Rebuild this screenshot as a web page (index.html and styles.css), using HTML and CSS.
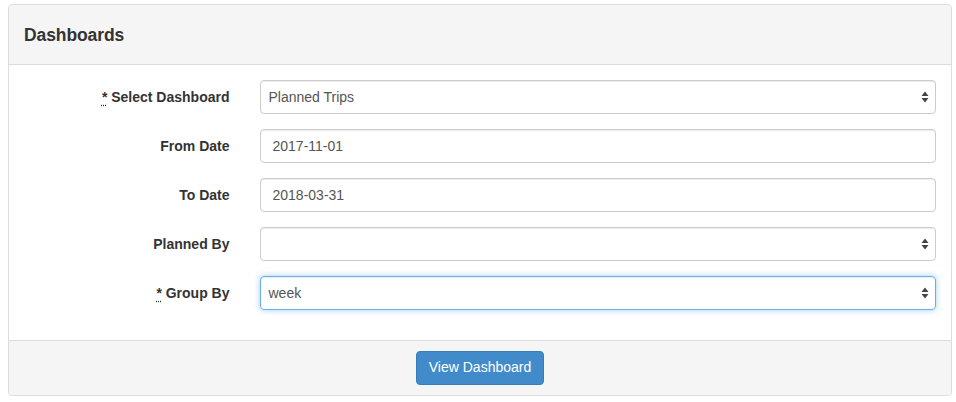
FILE: index.html
```html
<!DOCTYPE html>
<html>
<head>
<meta charset="utf-8">
<link rel="stylesheet" href="styles.css">
</head>
<body>
<div class="panel">
  <div class="panel-heading"><h3 class="panel-title">Dashboards</h3></div>
  <div class="panel-body">
    <div class="form-group">
      <label class="control-label"><abbr title="required">*</abbr> Select Dashboard</label>
      <div class="control-col">
        <div class="select">
          <span>Planned Trips</span>
          <svg class="arrows" width="8" height="12" viewBox="0 0 8 12"><path d="M4 0.5 L7.5 5 L0.5 5 Z M4 11.5 L7.5 7 L0.5 7 Z" fill="#444"/></svg>
        </div>
      </div>
    </div>
    <div class="form-group">
      <label class="control-label">From Date</label>
      <div class="control-col"><div class="input">2017-11-01</div></div>
    </div>
    <div class="form-group">
      <label class="control-label">To Date</label>
      <div class="control-col"><div class="input">2018-03-31</div></div>
    </div>
    <div class="form-group">
      <label class="control-label">Planned By</label>
      <div class="control-col">
        <div class="select">
          <span></span>
          <svg class="arrows" width="8" height="12" viewBox="0 0 8 12"><path d="M4 0.5 L7.5 5 L0.5 5 Z M4 11.5 L7.5 7 L0.5 7 Z" fill="#444"/></svg>
        </div>
      </div>
    </div>
    <div class="form-group">
      <label class="control-label"><abbr title="required">*</abbr> Group By</label>
      <div class="control-col">
        <div class="select focus">
          <span>week</span>
          <svg class="arrows" width="8" height="12" viewBox="0 0 8 12"><path d="M4 0.5 L7.5 5 L0.5 5 Z M4 11.5 L7.5 7 L0.5 7 Z" fill="#444"/></svg>
        </div>
      </div>
    </div>
  </div>
  <div class="panel-footer">
    <button class="btn">View Dashboard</button>
  </div>
</div>
</body>
</html>
```
FILE: styles.css
```css
* { box-sizing: border-box; }
html, body { margin: 0; padding: 0; background: #fff; }
body {
  font-family: "Liberation Sans", Arial, Helvetica, sans-serif;
  font-size: 14px;
  line-height: 1.42857;
  color: #333;
  padding: 4px 5px 0 8px;
}
.panel {
  width: 944px;
  border: 1px solid #ddd;
  border-radius: 4px;
  background: #fff;
  box-shadow: 0 1px 1px rgba(0,0,0,0.05);
}
.panel-heading {
  background: #f5f5f5;
  border-bottom: 1px solid #ddd;
  border-radius: 3px 3px 0 0;
  height: 60px;
  padding: 1px 15px 0;
  display: flex;
  align-items: center;
}
.panel-title {
  margin: 0;
  font-size: 17.5px;
  font-weight: bold;
  color: #333;
  letter-spacing: -0.1px;
}
.panel-body {
  padding: 15px 15px 15px;
}
.form-group {
  display: flex;
  align-items: center;
  margin: 0 -15px 15px;
}
.control-label {
  width: 25%;
  padding: 2px 15px 0;
  text-align: right;
  font-weight: bold;
}
abbr {
  text-decoration: underline dotted;
  text-underline-offset: 3px;
  border: none;
  cursor: help;
}
.control-col {
  width: 75%;
  padding: 0 15px;
}
.input, .select {
  height: 34px;
  border: 1px solid #ccc;
  border-radius: 4px;
  box-shadow: inset 0 1px 1px rgba(0,0,0,0.075);
  color: #555;
  font-size: 14px;
  display: flex;
  align-items: center;
  padding-top: 1px;
}
.input { padding-left: 12px; padding-right: 12px; }
.select {
  padding-left: 8px;
  padding-right: 6px;
  justify-content: space-between;
}
.select .arrows { flex: none; margin-top: -1px; }
.select.focus {
  border-color: #66afe9;
  box-shadow: inset 0 1px 1px rgba(0,0,0,0.075), 0 0 6px rgba(102,175,233,0.6);
}
.panel-footer {
  background: #f5f5f5;
  border-top: 1px solid #ddd;
  border-radius: 0 0 3px 3px;
  padding: 10px 15px;
  display: flex;
  justify-content: center;
}
.btn {
  font-family: "Liberation Sans", Arial, Helvetica, sans-serif;
  font-size: 14px;
  line-height: 1.42857;
  height: 34px;
  padding: 6px 12px;
  color: #fff;
  background: #428bca;
  border: 1px solid #357ebd;
  border-radius: 4px;
  cursor: pointer;
}
```
